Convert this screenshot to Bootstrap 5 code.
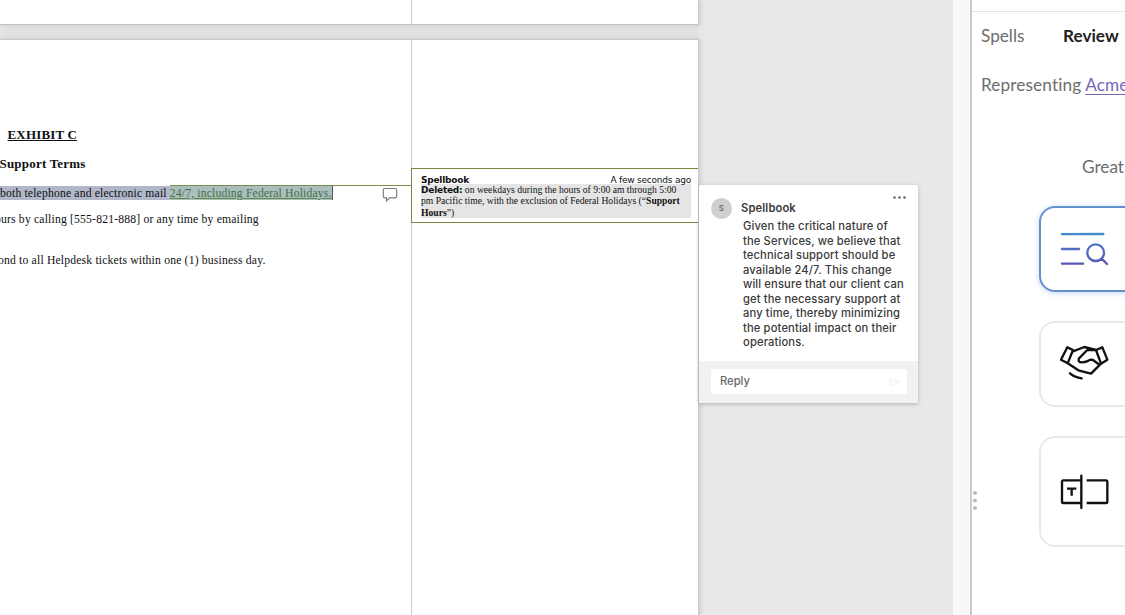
<!DOCTYPE html>
<html lang="en">
<head>
<meta charset="utf-8">
<title>Spellbook review</title>
<link href="https://cdn.jsdelivr.net/npm/bootstrap@5.3.0/dist/css/bootstrap.min.css" rel="stylesheet">
<style>
body{height:615px;background:#e8e8e8;font-family:"Liberation Sans",sans-serif}
.doc-pane{width:699px;background:#e2e2e2}
.sheet{background:#fff;border-right:1px solid #c9c9c9;box-shadow:2px 0 4px #0000001c}
.sheet-end{height:25px;border-bottom:1px solid #c4c4c4}
.sheet-main{border-top:1px solid #c9c9c9;margin-top:14px}
.sheet-text{width:412px;border-right:1px solid #cbcbcb;font:11.7px/16px "Liberation Serif",serif;letter-spacing:.165px;color:#111;white-space:nowrap}
.exhibit{font-size:13px;margin:87px 0 0 7.5px}
.terms{font-size:13px;margin:13px 0 0 -.5px;letter-spacing:.2px}
.tracked{height:15px;margin-top:14px}
.tracked::after{content:"";position:absolute;left:170px;right:-1px;top:-1px;height:1px;background:#7b8f4c}
.sel{background:#b0b7c9;height:14px;line-height:15px;letter-spacing:.15px}
.ins{background:#abbdbd;color:#3f7343;text-decoration:underline;text-decoration-color:#5a8a4c;border-right:1px solid #555;height:14px;line-height:15px;letter-spacing:.15px}
.bubble-ico{right:13px;top:0}
.line-call{margin:11px 0 0 -5px}
.line-desk{margin:25px 0 0 -2px}
.markup{width:287px;height:55px;margin:128px 0 0 -1px;border:1px solid #76893f;border-right:0;background:#fff;padding:6px 7px 0 9px;line-height:11px;color:#111}
.vd{font-family:"DejaVu Sans",sans-serif;font-size:9px;letter-spacing:-.22px;line-height:10px}
.deleted{font:9.65px/11.4px "Liberation Serif",serif;background:#e5e5e5;white-space:nowrap;margin-top:-1px;height:34px}
.comment{width:219px;height:218px;margin-top:185px;background:#fff;border-radius:2px;box-shadow:0 1px 4px #0000003d;font-family:Inter,sans-serif;font-size:11.2px;letter-spacing:.13px;line-height:14.5px;color:#3a3a3a;font-weight:500}
.avatar-s{width:21px;height:21px;background:#cfcfcf;font-size:8px;color:#666;margin-right:9px}
.comment-head{padding:13px 0 0 12px}
.comment-text{padding:0 0 0 44px;white-space:nowrap}
.dots{right:11px;top:10px}
.reply{background:#f1f1f1;padding:8px 11px 9px 12px;height:42px}
.reply-box{background:#fff;height:25px;border-radius:2px;padding:0 6px 0 9px;color:#666;letter-spacing:0}
.gutter{width:17px;background:#f8f8f8}
.side{width:155px;border-left:2px solid #cacaca;background:#fff;font-family:Lato,sans-serif;font-size:17.2px;line-height:22px;color:#6d6d6d;white-space:nowrap;font-variant-ligatures:none}
.side-top{height:12px;border-bottom:1px solid #e4e4e4}
.tabs-row{padding:13px 0 0 9px}
.tab-off{width:82px}
.tab-on{color:#222}
.party{padding:27px 0 0 9px;letter-spacing:.13px}
.greet{padding:60px 0 0 110px}
.tile{width:160px;height:86px;margin:29px 0 0 67px;padding:21px 0 0 19px;border:2px solid #e9e9e9;border-radius:16px;background:#fff;flex:none}
.tile svg{display:block}
.tile-on{border-color:#6690d0;box-shadow:0 1px 6px #4f8fe055;margin-top:28px;height:86px;padding-top:19px}
.tile-tall{height:111px;padding-top:34px}
.grip{left:0;top:490px}
.link-acme{color:#7467bb;text-decoration:underline;text-underline-offset:3px;text-decoration-thickness:1px}
</style>
</head>
<body class="d-flex overflow-hidden">
<main class="doc-pane d-flex flex-column flex-shrink-0">
  <div class="sheet sheet-end d-flex flex-shrink-0"><div class="sheet-text"></div></div>
  <div class="sheet sheet-main d-flex flex-grow-1">
    <div class="sheet-text flex-shrink-0">
      <div class="exhibit fw-bold"><u>EXHIBIT C</u></div>
      <div class="terms fw-bold">Support Terms</div>
      <div class="tracked position-relative d-flex">
        <span class="sel">both telephone and electronic mail&nbsp;</span><span class="ins">24/7, including Federal Holidays.</span>
        <svg class="bubble-ico position-absolute" width="16" height="16" viewBox="0 0 16 16" fill="none" stroke="#777" stroke-width="1.1"><path d="M3 2.500h10q1.700 0 1.700 1.700v6q0 1.700-1.700 1.700H7.500L4.500 15V11.900H3Q1.300 11.900 1.300 10.200v-6Q1.300 2.500 3 2.500z"/></svg>
      </div>
      <div class="line-call">ours by calling [555-821-888] or any time by emailing</div>
      <div class="line-desk">ond to all Helpdesk tickets within one (1) business day.</div>
    </div>
    <div class="flex-grow-1">
      <div class="markup position-relative">
        <div class="d-flex justify-content-between vd"><b>Spellbook</b><span>A few seconds ago</span></div>
        <div class="deleted"><b class="vd">Deleted:</b> on weekdays during the hours of 9:00 am through 5:00<br>pm Pacific time, with the exclusion of Federal Holidays (“<b>Support</b><br><b>Hours</b>”)</div>
      </div>
    </div>
  </div>
</main>
<section class="flex-grow-1">
  <article class="comment d-flex flex-column">
    <div class="comment-head d-flex align-items-center position-relative">
      <span class="avatar-s rounded-circle d-flex align-items-center justify-content-center">S</span><span class="fw-semibold">Spellbook</span>
      <svg class="dots position-absolute" width="15" height="5" viewBox="0 0 15 5" fill="#666"><circle cx="2.500" cy="2.500" r="1.300"/><circle cx="7.500" cy="2.500" r="1.300"/><circle cx="12.500" cy="2.500" r="1.300"/></svg>
    </div>
    <div class="comment-text">Given the critical nature of<br>the Services, we believe that<br>technical support should be<br>available 24/7. This change<br>will ensure that our client can<br>get the necessary support at<br>any time, thereby minimizing<br>the potential impact on their<br>operations.</div>
    <div class="reply mt-auto"><div class="reply-box d-flex align-items-center justify-content-between">Reply
      <svg width="12" height="10" viewBox="0 0 12 10" fill="none" stroke="#f1f1f1"><path d="M1 1l10 4L1 9V1zM1 5h10"/></svg></div></div>
  </article>
</section>
<div class="gutter flex-shrink-0"></div>
<aside class="side flex-shrink-0 position-relative d-flex flex-column overflow-hidden">
  <div class="side-top flex-shrink-0"></div>
  <div class="tabs-row d-flex"><span class="tab-off">Spells</span><b class="tab-on">Review</b></div>
  <div class="party">Representing <span class="link-acme">Acme</span></div>
  <div class="greet">Great</div>
  <div class="tile tile-on">
    <svg width="52" height="46" viewBox="105 110 156 138" fill="none" stroke-width="7" stroke-linecap="round"><defs><linearGradient id="g" gradientUnits="userSpaceOnUse" x1="0" y1="125" x2="0" y2="222"><stop stop-color="#3f8fc9"/><stop offset=".45" stop-color="#5070c4"/><stop offset="1" stop-color="#5757b5"/></linearGradient></defs><path stroke="url(#g)" d="M111 131.500L235 131M111 176h51M111 220h63M237 187a25 25 0 1 1-50 0a25 25 0 1 1 50 0M230 205l16 16"/></svg>
  </div>
  <div class="tile">
    <svg width="52" height="40" viewBox="105 105 156 120" fill="none" stroke="#111" stroke-width="7" stroke-linecap="round" stroke-linejoin="round"><path d="M127 115l17 8-16 40-20-11zM144 127l34-13 35 9M213 123l19-8 15 37-19 12zM213 123h-26l-25 25q-4 12 8 12 14 0 26-8l8 1 20 15M127 162l33 22 38 10 30-30M135 193q14 12 35 15"/></svg>
  </div>
  <div class="tile tile-tall">
    <svg width="52" height="42" viewBox="105 140 156 126" fill="none" stroke="#111" stroke-width="7"><path stroke-linecap="round" d="M169 151v97"/><path d="M169 165h-54q-4 0-4 4v60q0 4 4 4h54M185 165h58q4 0 4 4v60q0 4-4 4h-58M126 190h28M140 190v21"/></svg>
  </div>
  <svg class="grip position-absolute" width="6" height="22" viewBox="0 0 6 22" fill="#bbb"><circle cx="3" cy="3" r="2"/><circle cx="3" cy="10.500" r="2"/><circle cx="3" cy="18" r="2"/></svg>
</aside>
<script src="https://cdn.jsdelivr.net/npm/bootstrap@5.3.0/dist/js/bootstrap.bundle.min.js"></script>
</body>
</html>
